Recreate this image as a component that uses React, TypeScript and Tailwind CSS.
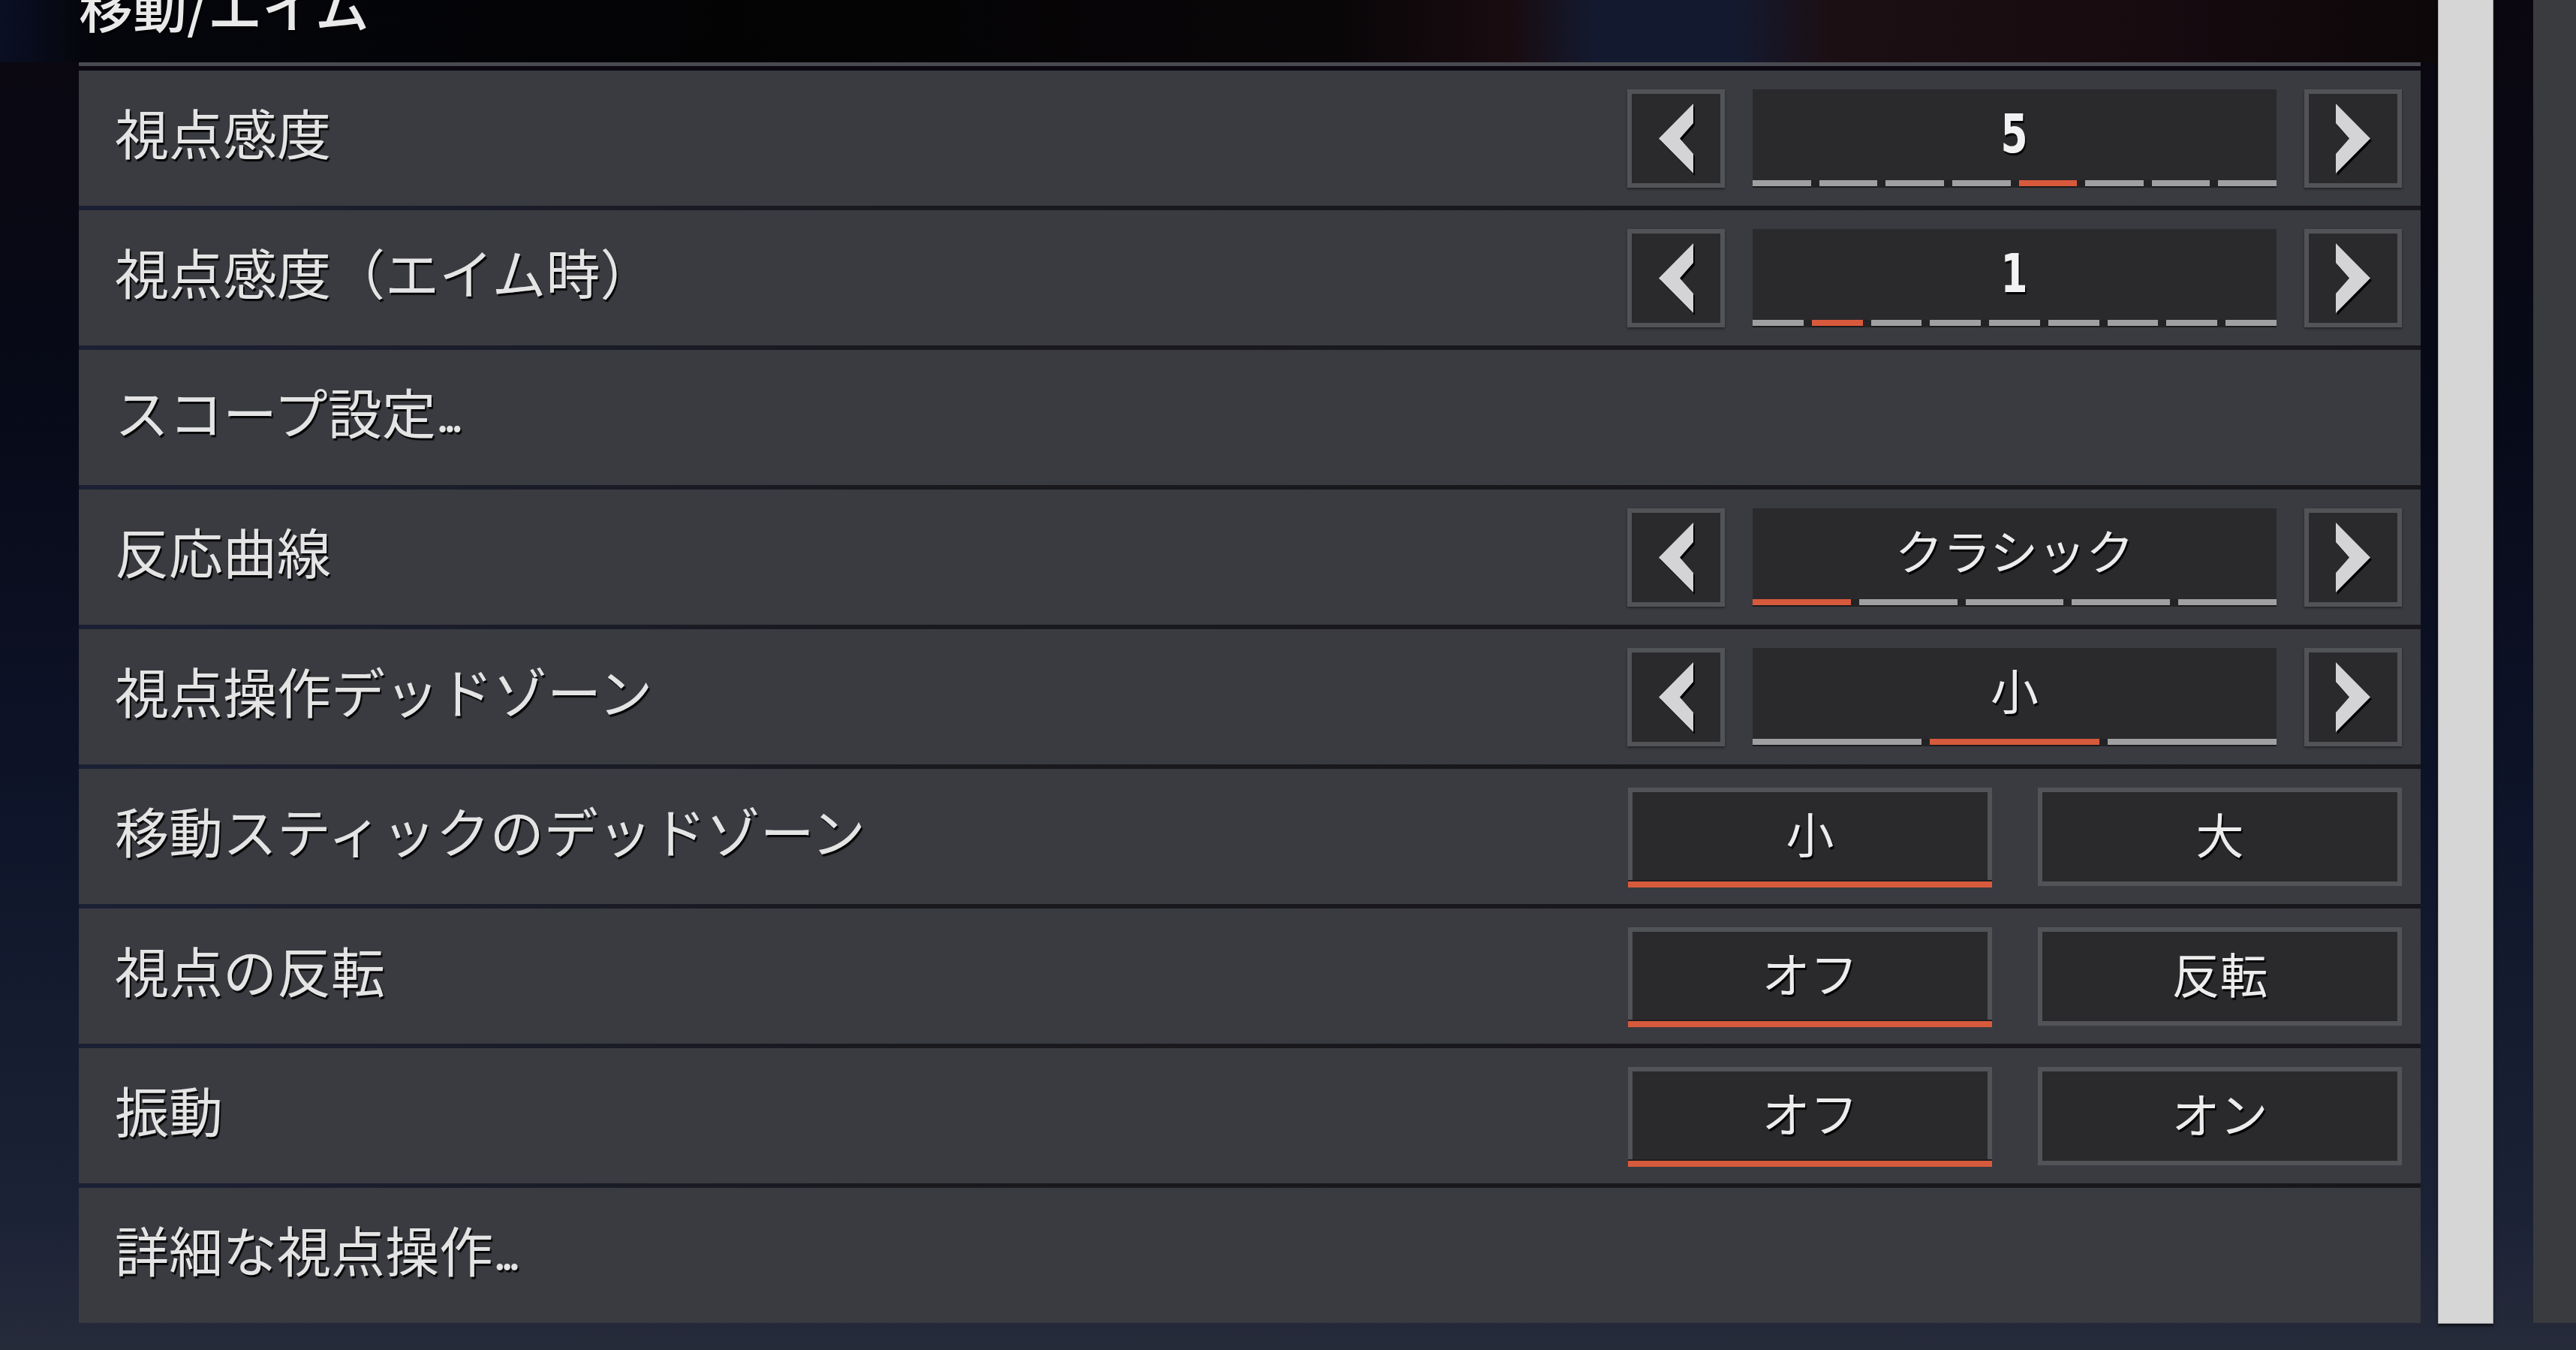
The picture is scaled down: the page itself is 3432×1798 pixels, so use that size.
import React from 'react';

type Row =
  | { label: React.ReactNode; type: 'stepper'; value: string; count: number; sel: number; num?: boolean }
  | { label: React.ReactNode; type: 'toggle'; options: [string, string]; sel: number }
  | { label: React.ReactNode; type: 'none' };

const Dots = () => <span className="tracking-[-8px] text-[64px]">...</span>;

const rows: Row[] = [
  { label: '視点感度', type: 'stepper', value: '5', count: 8, sel: 4, num: true },
  { label: '視点感度（エイム時）', type: 'stepper', value: '1', count: 9, sel: 1, num: true },
  { label: <>スコープ設定<Dots /></>, type: 'none' },
  { label: '反応曲線', type: 'stepper', value: 'クラシック', count: 5, sel: 0 },
  { label: '視点操作デッドゾーン', type: 'stepper', value: '小', count: 3, sel: 1 },
  { label: '移動スティックのデッドゾーン', type: 'toggle', options: ['小', '大'], sel: 0 },
  { label: '視点の反転', type: 'toggle', options: ['オフ', '反転'], sel: 0 },
  { label: '振動', type: 'toggle', options: ['オフ', 'オン'], sel: 0 },
  { label: <>詳細な視点操作<Dots /></>, type: 'none' },
];

function Chevron({ dir }: { dir: 'left' | 'right' }) {
  const pts =
    dir === 'left'
      ? '46,0 46,26 28,46.5 46,67 46,93 0,46.5'
      : '0,0 0,26 18,46.5 0,67 0,93 46,46.5';
  return (
    <svg width="46" height="93" viewBox="0 0 46 93" className="drop-shadow-[2px_3px_0_#000]">
      <polygon points={pts} fill="#d4d4d6" />
    </svg>
  );
}

function ArrowButton({ dir }: { dir: 'left' | 'right' }) {
  return (
    <div className="w-[130px] h-[131px] border-[6px] border-[#525357] bg-[#2a2a2d] flex items-center justify-center shadow-[0_2px_3px_rgba(0,0,0,0.4)]">
      <Chevron dir={dir} />
    </div>
  );
}

function Stepper({ value, count, sel, num }: { value: string; count: number; sel: number; num?: boolean }) {
  return (
    <div className="flex items-start gap-[37px]">
      <ArrowButton dir="left" />
      <div className="w-[698px] h-[131px] flex flex-col bg-[#2a2a2d]">
        <div className="flex-1 flex items-center justify-center pb-[4px]">
          {num ? (
            <span className="text-[72px] leading-none font-bold text-[#f2f2f2] font-['Liberation_Sans_Narrow','DejaVu_Sans_Condensed','Roboto',sans-serif] [text-shadow:2px_3px_1px_rgba(0,0,0,0.95)] scale-x-[0.8]">
              {value}
            </span>
          ) : (
            <span className="text-[64px] leading-none pb-[10px] text-[#ececec] [text-shadow:2px_3px_1px_rgba(0,0,0,0.95)]">
              {value}
            </span>
          )}
        </div>
        <div className="h-[10px] flex gap-[11px] bg-[#232325]">
          {Array.from({ length: count }).map((_, i) => (
            <div
              key={i}
              className={
                'flex-1 h-full border-b-[2px] border-b-[#1a1a1b] ' +
                (i === sel ? 'bg-[#d85a3c]' : 'bg-[#a0a0a3]')
              }
            />
          ))}
        </div>
      </div>
      <ArrowButton dir="right" />
    </div>
  );
}

function ToggleButton({ text, selected }: { text: string; selected: boolean }) {
  return (
    <div className="w-[485px] flex flex-col">
      <div
        className={
          'h-[123px] border-[#525357] bg-[#2a2a2d] flex items-center justify-center ' +
          (selected ? 'border-x-[6px] border-t-[6px]' : 'border-[6px] h-[131px]')
        }
      >
        <span className="text-[64px] leading-none pb-[12px] text-[#ececec] [text-shadow:2px_3px_1px_rgba(0,0,0,0.95)]">
          {text}
        </span>
      </div>
      {selected && <div className="h-[10px] bg-[#d85a3c] border-t-[2px] border-t-[#1e1e20]" />}
    </div>
  );
}

function Toggle({ options, sel }: { options: [string, string]; sel: number }) {
  return (
    <div className="flex items-start gap-[61px]">
      {options.map((o, i) => (
        <ToggleButton key={i} text={o} selected={i === sel} />
      ))}
    </div>
  );
}

export default function App() {
  return (
    <div className="w-[3432px] h-[1798px] overflow-hidden flex bg-[linear-gradient(180deg,#0b0710_0%,#070a18_30%,#0e1429_60%,#1c2236_90%,#262b3a_100%)] font-['Noto_Sans_CJK_JP','Noto_Sans',sans-serif]">
      {/* main column */}
      <div className="w-[3248px] flex flex-col">
        <div className="h-[83px] pl-[105px] overflow-hidden bg-[linear-gradient(90deg,#0a0f24_0%,#05060c_3.5%,#030304_30%,#090608_55%,#190c11_62%,#131a30_65.5%,#131a30_71%,#1c0f14_75%,#170b10_88%,#0c0709_100%)]">
          <div className="-mt-[30px] text-[72px] leading-[72px] text-[#e9e9e9] font-medium [text-shadow:2px_3px_1px_rgba(0,0,0,0.9)]">
            移動/エイム
          </div>
        </div>
        <div className="ml-[105px] w-[3120px] h-[5px] bg-[#4a4b50]" />
        <div className="ml-[105px] w-[3120px] mt-[6px] flex flex-col gap-[6px] bg-[linear-gradient(90deg,#1b2035_0%,#19191e_35%,#18171b_100%)]">
          {rows.map((r, i) => (
            <div
              key={i}
              className="h-[180px] bg-[#3a3b40] flex items-start justify-between pl-[48px] pr-[25px]"
            >
              <div className="h-full flex items-center pb-[18px] text-[72px] leading-none text-[#e4e4e4] [text-shadow:2px_3px_1px_rgba(0,0,0,0.9)] whitespace-nowrap">
                {r.label}
              </div>
              {r.type !== 'none' && (
                <div className="mt-[25px]">
                  {r.type === 'stepper' ? (
                    <Stepper value={r.value} count={r.count} sel={r.sel} num={r.num} />
                  ) : (
                    <Toggle options={r.options} sel={r.sel} />
                  )}
                </div>
              )}
            </div>
          ))}
        </div>
      </div>
      {/* scrollbar */}
      <div className="w-[74px] h-[1763px] bg-[#d6d6d6] border-x border-b border-[#a9a9ab] shadow-[0_3px_4px_rgba(0,0,0,0.6)]" />
      <div className="w-[53px]" />
      {/* right panel */}
      <div className="flex-1 h-[1762px] bg-[#3a3b3f]" />
    </div>
  );
}
